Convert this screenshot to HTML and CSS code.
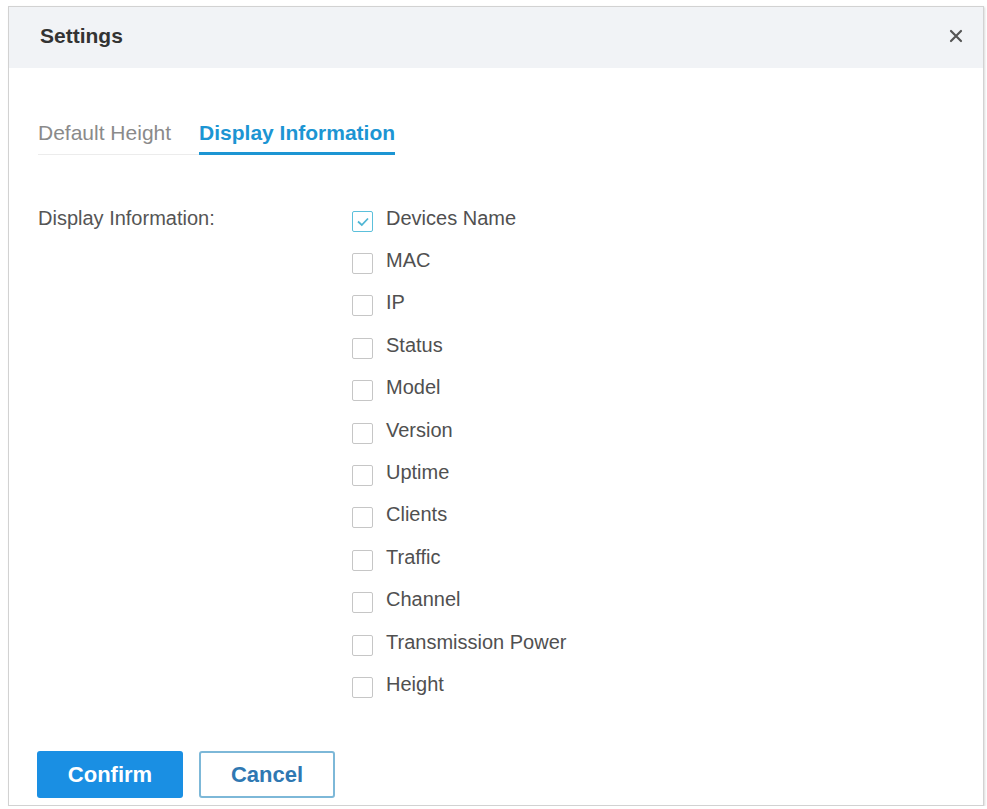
FILE: index.html
```html
<!DOCTYPE html>
<html lang="en">
<head>
    <title>Settings</title>
    <link rel="stylesheet" href="styles.css">
</head>
<body>
    <div class="dialog">
        <div class="dialog-header">
            <p class="dialog-title">Settings</p>
            <button class="close-btn" aria-label="Close">
                <svg width="14" height="14" viewBox="0 0 14 14">
                    <path d="M2 2 L12 12 M12 2 L2 12" stroke="#555" stroke-width="2.2" stroke-linecap="round" fill="none"/>
                </svg>
            </button>
        </div>

        <div class="dialog-body">
            <div class="tabs">
                <span class="tab">Default Height</span>
                <span class="tab tab-active">Display Information</span>
            </div>

            <div class="form-row">
                <span class="form-label">Display Information:</span>
                <div class="check-list">
                    <label class="check-item"><span class="checkbox checked">
                        <svg width="14" height="11" viewBox="0 0 14 11"><path d="M2 5.5 L5.8 9 L12 2.5" stroke="#4fb6d4" stroke-width="1.8" fill="none"/></svg>
                    </span>Devices Name</label>
                    <label class="check-item"><span class="checkbox"></span>MAC</label>
                    <label class="check-item"><span class="checkbox"></span>IP</label>
                    <label class="check-item"><span class="checkbox"></span>Status</label>
                    <label class="check-item"><span class="checkbox"></span>Model</label>
                    <label class="check-item"><span class="checkbox"></span>Version</label>
                    <label class="check-item"><span class="checkbox"></span>Uptime</label>
                    <label class="check-item"><span class="checkbox"></span>Clients</label>
                    <label class="check-item"><span class="checkbox"></span>Traffic</label>
                    <label class="check-item"><span class="checkbox"></span>Channel</label>
                    <label class="check-item"><span class="checkbox"></span>Transmission Power</label>
                    <label class="check-item"><span class="checkbox"></span>Height</label>
                </div>
            </div>
        </div>

        <div class="dialog-footer">
            <button class="btn btn-primary">Confirm</button>
            <button class="btn btn-default">Cancel</button>
        </div>
    </div>
</body>
</html>
```

FILE: styles.css
```css
body {
    margin: 0;
    padding: 6px 0 0 8px;
    background-color: white;
    font-family: "Liberation Sans", Arial, sans-serif;
    color: #555;
}
.dialog {
    width: 974px;
    height: 798px;
    border: 1px solid #d2d2d2;
    box-shadow: 1px 1px 2px rgba(0, 0, 0, 0.15);
    display: flex;
    flex-direction: column;
    background-color: white;
}
.dialog-header {
    height: 61px;
    background-color: #f1f3f6;
    display: flex;
    align-items: center;
    justify-content: space-between;
    padding: 0 20px 0 31px;
}
.dialog-title {
    margin: 0 0 4px 0;
    font-size: 21px;
    font-weight: bold;
    color: #333;
}
.close-btn {
    border: none;
    background: transparent;
    padding: 0;
    margin-bottom: 4px;
    display: flex;
    cursor: pointer;
}
.dialog-body {
    flex: 1;
    padding: 53px 28px 0 29px;
}
.tabs {
    display: inline-flex;
    gap: 28px;
    border-bottom: 1px solid #ececec;
}
.tab {
    font-size: 21px;
    line-height: 24px;
    color: #8a8a8a;
    padding-bottom: 7px;
    margin-bottom: -1px;
    border-bottom: 3px solid transparent;
}
.tab-active {
    color: #1c95d3;
    font-weight: bold;
    border-bottom-color: #1c95d3;
}
.form-row {
    display: flex;
    margin-top: 42px;
}
.form-label {
    width: 314px;
    font-size: 20px;
    line-height: 42.4px;
}
.check-list {
    display: flex;
    flex-direction: column;
}
.check-item {
    height: 42.4px;
    display: flex;
    align-items: center;
    font-size: 20px;
    color: #505050;
}
.checkbox {
    width: 19px;
    height: 19px;
    border: 1px solid #c6c6c6;
    border-radius: 2px;
    margin-right: 13px;
    margin-top: 6px;
    display: flex;
    align-items: center;
    justify-content: center;
}
.checked {
    border-color: #5cc0db;
}
.dialog-footer {
    display: flex;
    gap: 16px;
    padding: 0 0 7px 28px;
}
.btn {
    height: 47px;
    font-family: "Liberation Sans", Arial, sans-serif;
    font-size: 22px;
    font-weight: bold;
    border-radius: 3px;
    cursor: pointer;
}
.btn-primary {
    width: 146px;
    background-color: #1a8fe3;
    border: none;
    color: white;
}
.btn-default {
    width: 136px;
    background-color: white;
    border: 2px solid #7db8d8;
    color: #2f78b2;
}
```
